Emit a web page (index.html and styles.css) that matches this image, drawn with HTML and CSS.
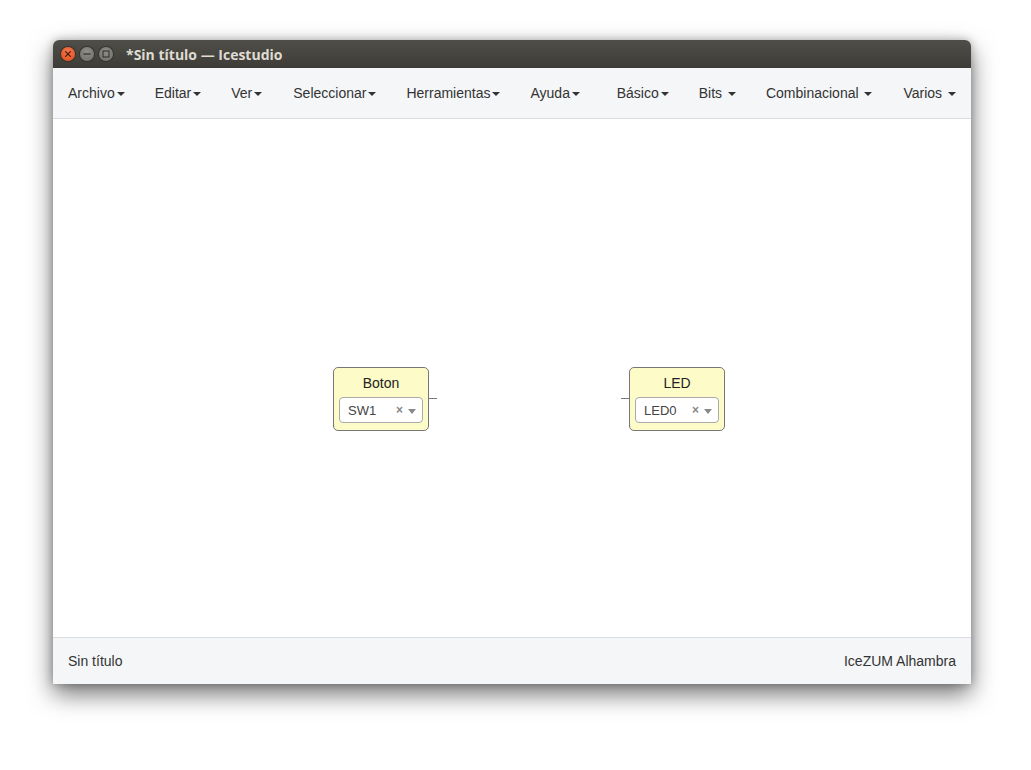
FILE: index.html
```html
<!DOCTYPE html>
<html>
<head>
<meta charset="utf-8">
<link rel="stylesheet" href="styles.css">
</head>
<body>
<div class="window">
  <div class="titlebar">
    <div class="wbtns">
      <span class="wbtn close"><svg width="14" height="14" viewBox="0 0 14 14"><path d="M4.6 4.6 L9.4 9.4 M9.4 4.6 L4.6 9.4" stroke="#4a1a08" stroke-width="1.3" stroke-linecap="round"/></svg></span>
      <span class="wbtn"><svg width="14" height="14" viewBox="0 0 14 14"><path d="M3.5 7 H10.5" stroke="#3c3b37" stroke-width="1.4"/></svg></span>
      <span class="wbtn"><svg width="14" height="14" viewBox="0 0 14 14"><rect x="4" y="4" width="6" height="6" fill="none" stroke="#3c3b37" stroke-width="1.2"/></svg></span>
    </div>
    <div class="wtitle">*Sin título — Icestudio</div>
  </div>
  <div class="menubar">
    <ul class="nav">
      <li>Archivo<span class="caret"></span></li>
      <li>Editar<span class="caret"></span></li>
      <li>Ver<span class="caret"></span></li>
      <li>Seleccionar<span class="caret"></span></li>
      <li>Herramientas<span class="caret"></span></li>
      <li>Ayuda<span class="caret"></span></li>
    </ul>
    <ul class="nav">
      <li>Básico<span class="caret"></span></li>
      <li>Bits <span class="caret"></span></li>
      <li>Combinacional <span class="caret"></span></li>
      <li>Varios <span class="caret"></span></li>
    </ul>
  </div>
  <div class="canvas">
    <div class="node node-boton">
      <div class="node-title">Boton</div>
      <div class="sel"><span class="sel-val">SW1</span><span class="sel-x">×</span><span class="sel-arrow"></span></div>
      <div class="port port-out"></div>
    </div>
    <div class="node node-led">
      <div class="node-title">LED</div>
      <div class="sel"><span class="sel-val">LED0</span><span class="sel-x">×</span><span class="sel-arrow"></span></div>
      <div class="port port-in"></div>
    </div>
  </div>
  <div class="footer">
    <span>Sin título</span>
    <span>IceZUM Alhambra</span>
  </div>
</div>
</body>
</html>
```
FILE: styles.css
```css
* { box-sizing: border-box; }
html, body { margin: 0; padding: 0; background: #ffffff; }
body {
  min-height: 770px;
  padding: 40px 0 0 53px;
  font-family: "Liberation Sans", Arial, sans-serif;
  font-size: 14px;
  color: #333333;
}
.window {
  width: 918px;
  height: 644px;
  border-radius: 6px 6px 0 0;
  box-shadow: 0 10px 24px rgba(0,0,0,0.55), 0 0 8px rgba(0,0,0,0.25);
  display: flex;
  flex-direction: column;
  background: #ffffff;
}
.titlebar {
  height: 28px;
  flex: none;
  background: linear-gradient(#504e49, #3d3c37);
  border-radius: 6px 6px 0 0;
  display: flex;
  align-items: center;
  padding-left: 8px;
}
.wbtns { display: flex; gap: 5px; }
.wbtn {
  width: 14px; height: 14px;
  border-radius: 50%;
  background: radial-gradient(circle at 50% 35%, #8f8d88, #6f6e69);
  box-shadow: 0 0 0 1px #35342f;
  display: block;
}
.wbtn svg { display: block; }
.wbtn.close { background: radial-gradient(circle at 50% 35%, #f47950, #df4a16); }
.wtitle {
  margin-left: 13px;
  font-family: "Open Sans", "DejaVu Sans", sans-serif;
  font-weight: bold;
  font-size: 14px;
  color: #dfdbd2;
}
.menubar {
  height: 51px;
  flex: none;
  background: #f5f6f8;
  border-bottom: 1px solid #d9dce0;
  display: flex;
  justify-content: space-between;
  align-items: center;
}
.nav { list-style: none; margin: 0; padding: 0; display: flex; }
.nav li { padding: 0 15px; line-height: 20px; white-space: pre; }
.nav li:nth-child(4) { padding-left: 16px; }
.nav:last-child li:first-child { padding-left: 14px; }
.caret {
  display: inline-block;
  width: 0; height: 0;
  margin-left: 2px;
  vertical-align: middle;
  border-top: 4px solid #333;
  border-left: 4px solid transparent;
  border-right: 4px solid transparent;
}
.canvas {
  flex: 1;
  position: relative;
  background: #ffffff;
}
.node {
  position: absolute;
  top: 248px;
  width: 96px;
  height: 64px;
  background: #fdfbc8;
  border: 1px solid #777777;
  border-radius: 5px;
  padding: 6px 5px 0 5px;
}
.node-boton { left: 280px; }
.node-led { left: 576px; }
.node-title {
  text-align: center;
  font-size: 14px;
  line-height: 18px;
  color: #222;
}
.sel {
  margin-top: 5px;
  height: 26px;
  background: #ffffff;
  border: 1px solid #aaaaaa;
  border-radius: 4px;
  display: flex;
  align-items: center;
  padding-left: 8px;
  font-size: 13px;
  color: #444;
}
.sel-val { flex: 1; }
.sel-x { font-weight: bold; color: #888; font-size: 12px; margin-right: 5px; }
.sel-arrow {
  width: 0; height: 0;
  margin-right: 6px;
  margin-top: 2px;
  border-top: 5px solid #888;
  border-left: 4px solid transparent;
  border-right: 4px solid transparent;
}
.port {
  position: absolute;
  top: 30px;
  width: 8px;
  height: 1px;
  background: #777;
}
.port-out { right: -9px; }
.port-in { left: -9px; }
.footer {
  height: 47px;
  flex: none;
  background: #f5f6f8;
  border-top: 1px solid #d9dce0;
  display: flex;
  justify-content: space-between;
  align-items: center;
  padding: 0 15px;
}
```
